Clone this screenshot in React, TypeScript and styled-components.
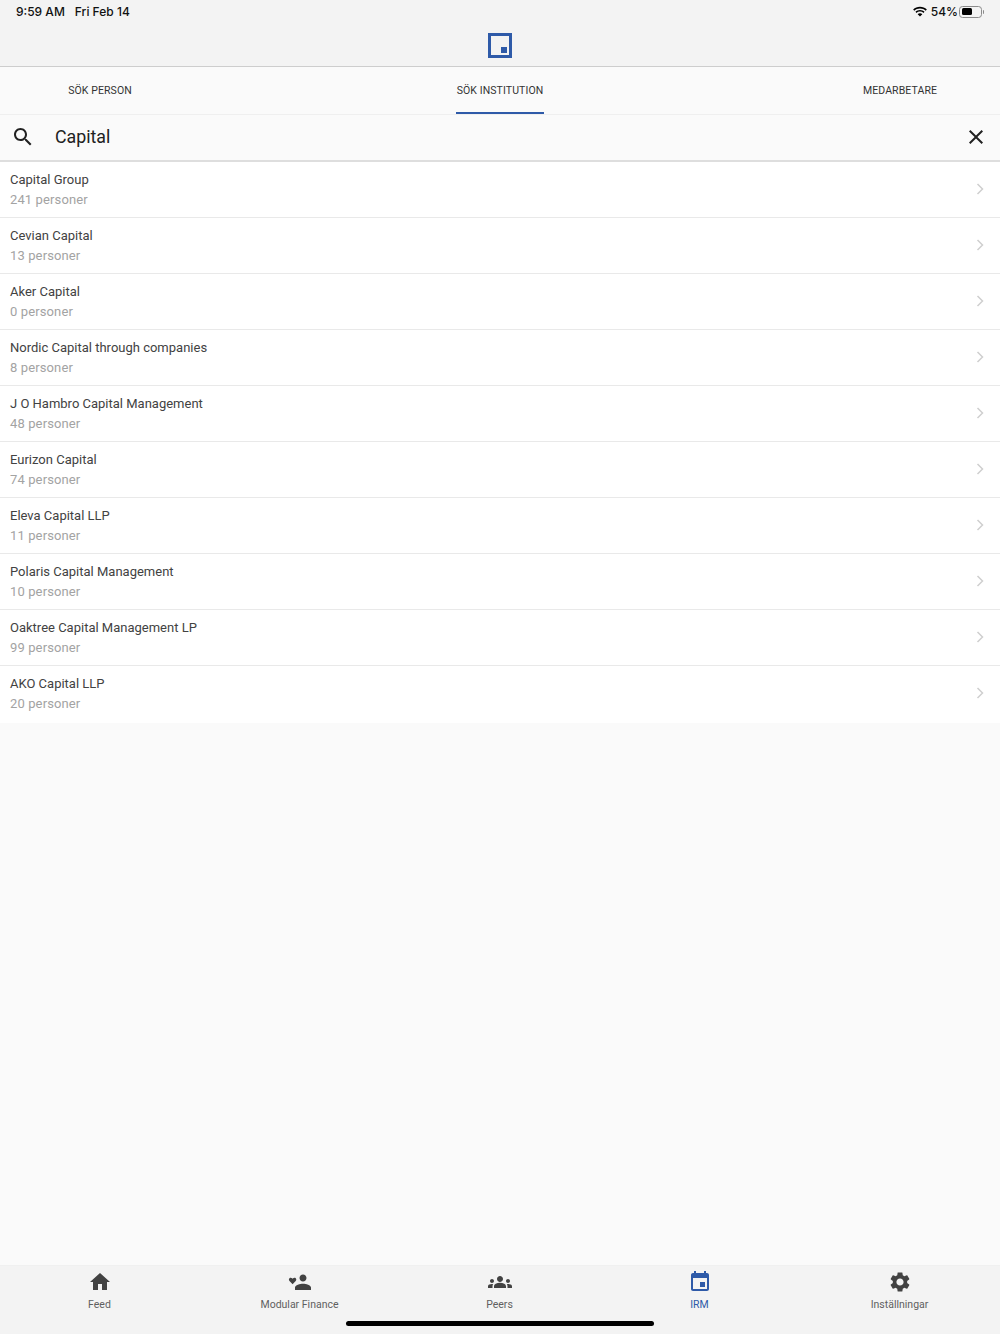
import styled, { createGlobalStyle } from 'styled-components';

const GlobalStyle = createGlobalStyle`
  html, body {
    margin: 0;
    padding: 0;
    height: 100%;
    background-color: #fafafa;
    font-family: Roboto, "Liberation Sans", sans-serif;
  }
  #root {
    height: 100%;
  }
`;

const Wrapper = styled.div`
  display: flex;
  flex-direction: column;
  height: 1334px;
  overflow: hidden;
`;

const Header = styled.header`
  flex: 0 0 67px;
  box-sizing: border-box;
  background-color: #f3f3f3;
  border-bottom: 1px solid #cdcdcd;
`;

const StatusBar = styled.div`
  display: flex;
  justify-content: space-between;
  align-items: center;
  box-sizing: border-box;
  height: 24px;
  padding: 0 15px 1px 16px;
  font-family: Inter, "Noto Sans", sans-serif;
  font-size: 12px;
  font-weight: 500;
  color: #111;
`;

const StatusLeft = styled.div`
  display: flex;
  gap: 10px;
`;

const StatusRight = styled.div`
  display: flex;
  align-items: center;
  gap: 3px;
`;

const Battery = styled.div`
  position: relative;
  box-sizing: border-box;
  width: 23px;
  height: 12px;
  padding: 1.5px;
  border: 1px solid #8a8a8a;
  border-radius: 3.5px;
  margin: 0 3px 0 -2px;
  &::after {
    content: '';
    position: absolute;
    right: -3px;
    top: 3px;
    width: 1.5px;
    height: 4px;
    background-color: #8a8a8a;
    border-radius: 0 1px 1px 0;
  }
`;

const BatteryLevel = styled.div`
  height: 100%;
  background-color: #000;
  border-radius: 1.5px;
`;

const LogoRow = styled.div`
  display: flex;
  justify-content: center;
  padding-top: 9px;
`;

const Logo = styled.div`
  position: relative;
  box-sizing: border-box;
  width: 24px;
  height: 25px;
  border: 3px solid #2e5aa8;
  &::after {
    content: '';
    position: absolute;
    right: 2px;
    bottom: 2px;
    width: 6px;
    height: 6px;
    background-color: #2e5aa8;
  }
`;

const Tabs = styled.nav`
  flex: 0 0 47px;
  box-sizing: border-box;
  display: grid;
  grid-template-columns: 200px 1fr 200px;
  background-color: #fafafa;
  border-bottom: 1px solid #efefef;
`;

const TabCell = styled.div`
  display: flex;
  justify-content: center;
`;

const Tab = styled.div<{ $active?: boolean }>`
  display: flex;
  align-items: center;
  justify-content: center;
  box-sizing: border-box;
  height: 47px;
  padding: 2px 1px 0;
  font-size: 10.5px;
  font-weight: 400;
  letter-spacing: 0.1px;
  color: #333;
  border-bottom: 2px solid ${(props) => (props.$active ? '#2e5aa8' : 'transparent')};
`;

const SearchBar = styled.div`
  flex: 0 0 47px;
  box-sizing: border-box;
  display: flex;
  align-items: center;
  padding: 0 12px 2px 11px;
  background-color: #fafafa;
  border-bottom: 2px solid #dedede;
`;

const SearchText = styled.div`
  flex: 1;
  margin-left: 20px;
  font-size: 17.8px;
  color: #212121;
`;

const List = styled.ul`
  flex: 0 0 auto;
  margin: 0;
  padding: 0 0 1px;
  list-style: none;
  background-color: #fff;
`;

const Row = styled.li`
  box-sizing: border-box;
  display: flex;
  align-items: center;
  justify-content: space-between;
  height: 56px;
  padding: 0 16px 2px 10px;
  border-bottom: 1px solid #e9e9e9;
  &:last-child {
    border-bottom: none;
  }
`;

const RowName = styled.div`
  padding-top: 2px;
  font-size: 13px;
  line-height: 18px;
  color: #424242;
`;

const RowCount = styled.div`
  margin-top: 2px;
  font-size: 13px;
  line-height: 18px;
  letter-spacing: 0.12px;
  color: #a3a3a3;
`;

const Spacer = styled.div`
  flex: 1;
`;

const BottomBar = styled.footer`
  position: relative;
  flex: 0 0 69px;
  display: grid;
  grid-template-columns: repeat(5, 1fr);
  background-color: #f3f3f3;
  border-top: 1px solid #f0f0f0;
  box-sizing: border-box;
`;

const BarItem = styled.div<{ $active?: boolean }>`
  display: flex;
  flex-direction: column;
  align-items: center;
  padding: 4px 1px 0 0;
  font-size: 10.5px;
  letter-spacing: 0;
  color: ${(props) => (props.$active ? '#2e5aa8' : '#5f5f5f')};
  svg {
    display: block;
    fill: ${(props) => (props.$active ? '#2e5aa8' : '#424242')};
  }
`;

const BarLabel = styled.span`
  margin-top: 4px;
  line-height: 14px;
`;

const HomeIndicator = styled.div`
  position: absolute;
  left: 346px;
  bottom: 8px;
  width: 308px;
  height: 5px;
  border-radius: 3px;
  background-color: #000;
`;

const results = [
  { name: 'Capital Group', count: '241 personer' },
  { name: 'Cevian Capital', count: '13 personer' },
  { name: 'Aker Capital', count: '0 personer' },
  { name: 'Nordic Capital through companies', count: '8 personer' },
  { name: 'J O Hambro Capital Management', count: '48 personer' },
  { name: 'Eurizon Capital', count: '74 personer' },
  { name: 'Eleva Capital LLP', count: '11 personer' },
  { name: 'Polaris Capital Management', count: '10 personer' },
  { name: 'Oaktree Capital Management LP', count: '99 personer' },
  { name: 'AKO Capital LLP', count: '20 personer' },
];

const navIcons = {
  home: 'M10 20v-6h4v6h5v-8h3L12 3 2 12h3v8z',
  person:
    'M15 11.5c1.93 0 3.5-1.57 3.5-3.5S16.93 4.5 15 4.5 11.500 6.07 11.5 8s1.57 3.5 3.5 3.500zm0 2.2c-2.9 0-8 1.3-8 3.9V20h16v-2.400c0-2.600-5.100-3.900-8-3.900zM4.600 14.200l3.100-3.200c.8-.85.8-2.050.05-2.800-.75-.7-1.950-.65-2.650.1l-.5.500-.5-.5c-.7-.75-1.900-.8-2.650-.1-.75.750-.75 1.950.05 2.800z',
  groups:
    'M12 12.75c1.63 0 3.07.39 4.24.9 1.08.48 1.76 1.56 1.76 2.73V18H6v-1.61c0-1.18.68-2.26 1.76-2.73 1.17-.52 2.61-.91 4.24-.91zM4 13c1.1 0 2-.9 2-2s-.9-2-2-2-2 .9-2 2 .9 2 2 2zm1.13 1.1c-.37-.06-.74-.1-1.13-.1-.99 0-1.93.21-2.78.58C.48 14.9 0 15.62 0 16.43V18h4.5v-1.61c0-.83.23-1.61.63-2.29zM20 13c1.1 0 2-.9 2-2s-.9-2-2-2-2 .9-2 2 .9 2 2 2zm4 3.43c0-.81-.48-1.53-1.22-1.85-.85-.37-1.79-.58-2.78-.58-.39 0-.76.04-1.13.1.4.68.63 1.46.63 2.29V18H24v-1.57zM12 6c1.66 0 3 1.34 3 3s-1.34 3-3 3-3-1.34-3-3 1.34-3 3-3z',
  event:
    'M17 12h-5v5h5v-5zM16 1v2H8V1H6v2H5c-1.11 0-1.99.9-1.99 2L3 19c0 1.1.89 2 2 2h14c1.1 0 2-.9 2-2V5c0-1.1-.9-2-2-2h-1V1h-2zm3 18H5V8h14v11z',
  settings:
    'M19.14 12.94c.04-.3.06-.61.06-.94 0-.32-.02-.64-.07-.94l2.03-1.58c.18-.14.23-.41.12-.61l-1.92-3.32c-.12-.22-.37-.29-.59-.22l-2.39.96c-.5-.38-1.03-.7-1.62-.94l-.36-2.54c-.04-.24-.24-.41-.48-.41h-3.84c-.24 0-.43.17-.47.41l-.36 2.54c-.59.24-1.13.57-1.62.94l-2.39-.96c-.22-.08-.47 0-.59.22L2.74 8.87c-.12.21-.08.47.12.61l2.03 1.58c-.05.3-.09.63-.09.94s.02.64.07.94l-2.03 1.58c-.18.14-.23.41-.12.61l1.92 3.32c.12.22.37.29.59.22l2.39-.96c.5.38 1.03.7 1.62.94l.36 2.54c.05.24.24.41.48.41h3.84c.24 0 .44-.17.47-.41l.36-2.54c.59-.24 1.13-.56 1.62-.94l2.39.96c.22.08.47 0 .59-.22l1.92-3.32c.12-.22.07-.47-.12-.61l-2.01-1.58zM12 15.6c-1.98 0-3.6-1.62-3.6-3.6s1.62-3.6 3.6-3.6 3.6 1.62 3.6 3.6-1.62 3.6-3.6 3.6z',
};

const navItems = [
  { label: 'Feed', icon: navIcons.home },
  { label: 'Modular Finance', icon: navIcons.person },
  { label: 'Peers', icon: navIcons.groups },
  { label: 'IRM', icon: navIcons.event, active: true },
  { label: 'Inställningar', icon: navIcons.settings },
];

function App() {
  return (
    <Wrapper>
      <GlobalStyle />
      <Header>
        <StatusBar>
          <StatusLeft>
            <span>9:59 AM</span>
            <span>Fri Feb 14</span>
          </StatusLeft>
          <StatusRight>
            <svg width="16" height="12" viewBox="0 0 16 12" fill="#000">
              <path d="M8 2.400c2.200 0 4.200.85 5.700 2.250l1.150-1.200C13.050 1.750 10.650.7 8 .7S2.950 1.750 1.150 3.450L2.300 4.650C3.800 3.250 5.800 2.400 8 2.400z" />
              <path d="M8 5.600c1.300 0 2.500.5 3.400 1.350l1.150-1.200C11.350 4.600 9.750 3.900 8 3.900s-3.350.7-4.550 1.850l1.150 1.200C5.500 6.100 6.700 5.600 8 5.600z" />
              <path d="M8 7.200c-.95 0-1.750.35-2.350.95L8 10.600l2.350-2.450c-.6-.6-1.400-.95-2.350-.95z" />
            </svg>
            <span>54%</span>
            <Battery>
              <BatteryLevel style={{ width: '58%' }} />
            </Battery>
          </StatusRight>
        </StatusBar>
        <LogoRow>
          <Logo />
        </LogoRow>
      </Header>
      <Tabs>
        <TabCell>
          <Tab>SÖK PERSON</Tab>
        </TabCell>
        <TabCell>
          <Tab $active>SÖK INSTITUTION</Tab>
        </TabCell>
        <TabCell>
          <Tab>MEDARBETARE</Tab>
        </TabCell>
      </Tabs>
      <SearchBar>
        <svg width="24" height="24" viewBox="0 0 24 24" fill="#212121">
          <path d="M15.5 14h-.79l-.28-.27C15.41 12.59 16 11.11 16 9.5 16 5.910 13.090 3 9.500 3S3 5.910 3 9.500 5.910 16 9.500 16c1.610 0 3.090-.59 4.230-1.570l.27.28v.79l5 4.990L20.490 19l-4.990-5zm-6 0C7.010 14 5 11.990 5 9.500S7.010 5 9.500 5 14 7.010 14 9.500 11.990 14 9.500 14z" />
        </svg>
        <SearchText>Capital</SearchText>
        <svg width="24" height="24" viewBox="0 0 24 24" fill="#212121">
          <path d="M19 6.410 17.590 5 12 10.590 6.410 5 5 6.410 10.590 12 5 17.590 6.410 19 12 13.410 17.590 19 19 17.590 13.410 12z" />
        </svg>
      </SearchBar>
      <List>
        {results.map((item) => (
          <Row key={item.name}>
            <div>
              <RowName>{item.name}</RowName>
              <RowCount>{item.count}</RowCount>
            </div>
            <svg width="8" height="12" viewBox="0 0 8 12" fill="none" stroke="#cfcfcf" strokeWidth="1.500">
              <path d="M1.500 1l5 5-5 5" />
            </svg>
          </Row>
        ))}
      </List>
      <Spacer />
      <BottomBar>
        {navItems.map((item) => (
          <BarItem key={item.label} $active={item.active}>
            <svg width="24" height="24" viewBox="0 0 24 24">
              <path d={item.icon} />
            </svg>
            <BarLabel>{item.label}</BarLabel>
          </BarItem>
        ))}
        <HomeIndicator />
      </BottomBar>
    </Wrapper>
  );
}

export default App;
